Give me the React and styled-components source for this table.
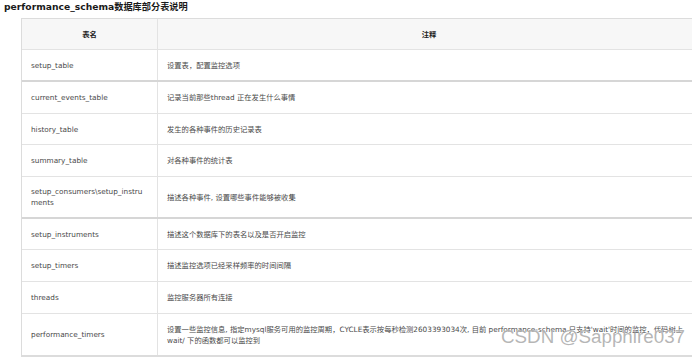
import styled, { createGlobalStyle } from 'styled-components';

const GlobalStyle = createGlobalStyle`
  html, body {
    margin: 0;
    padding: 0;
    background: #fff;
    overflow: hidden;
  }
  body {
    font-family: "DejaVu Sans", "Noto Sans CJK SC", sans-serif;
  }
`;

const Page = styled.div`
  position: relative;
  width: 692px;
  height: 357px;
  overflow: hidden;
`;

const Title = styled.h3`
  margin: 0;
  padding: 1px 0 0 4px;
  height: 17px;
  font-size: 9.2px;
  line-height: 12px;
  font-weight: 700;
  color: #1a1a1a;
  white-space: nowrap;
`;

const Table = styled.div`
  margin-left: 21px;
  width: 678px;
  border: 1px solid #dcdcdc;
  border-bottom-width: 2px;
`;

const Row = styled.div`
  display: grid;
  grid-template-columns: 135px 1fr;
  height: ${(p) => p.$h}px;
  box-sizing: border-box;
  border-bottom: ${(p) => (p.$thick ? '2px solid #d6d6d6' : '1px solid #e3e3e3')};
  background: ${(p) => (p.$head ? '#f7f7f7' : '#fff')};
  &:last-child {
    border-bottom: none;
  }
`;

const Cell = styled.div`
  display: flex;
  align-items: center;
  justify-content: ${(p) => (p.$head ? 'center' : 'flex-start')};
  padding: 0 9px;
  border-left: ${(p) => (p.$first ? 'none' : '1px solid #e3e3e3')};
  font-size: 7.3px;
  line-height: 11px;
  font-weight: ${(p) => (p.$head ? 700 : 400)};
  color: ${(p) => (p.$head ? '#222' : '#4a4a4a')};
  white-space: nowrap;
`;

const Watermark = styled.div`
  position: absolute;
  left: 501px;
  top: 325px;
  font-family: "Liberation Sans", Arial, sans-serif;
  font-size: 18.8px;
  line-height: 24px;
  color: rgba(150, 150, 150, 0.7);
  text-shadow: 0 0 1px rgba(255, 255, 255, 0.9);
  white-space: nowrap;
  pointer-events: none;
`;

const rows = [
  { name: 'setup_table', note: '设置表，配置监控选项', h: 32, thick: true },
  { name: 'current_events_table', note: '记录当前那些thread 正在发生什么事情', h: 32 },
  { name: 'history_table', note: '发生的各种事件的历史记录表', h: 31 },
  { name: 'summary_table', note: '对各种事件的统计表', h: 32 },
  {
    name: ['setup_consumers\\setup_instru', 'ments'],
    note: '描述各种事件, 设置哪些事件能够被收集',
    h: 42,
    thick: true,
  },
  { name: 'setup_instruments', note: '描述这个数据库下的表名以及是否开启监控', h: 31 },
  { name: 'setup_timers', note: '描述监控选项已经采样频率的时间间隔', h: 32 },
  { name: 'threads', note: '监控服务器所有连接', h: 32 },
  {
    name: 'performance_timers',
    note: [
      "设置一些监控信息, 指定mysql服务可用的监控周期，CYCLE表示按每秒检测2603393034次, 目前 performance-schema 只支持'wait'时间的监控，代码树上",
      'wait/ 下的函数都可以监控到',
    ],
    h: 41,
  },
];

const Lines = ({ text }) =>
  Array.isArray(text) ? (
    <span>
      {text.map((t, i) => (
        <span key={i}>
          {t}
          {i < text.length - 1 && <br />}
        </span>
      ))}
    </span>
  ) : (
    text
  );

export default function App() {
  return (
    <>
      <GlobalStyle />
      <Page>
        <Title>performance_schema数据库部分表说明</Title>
        <Table>
          <Row $head $h={31}>
            <Cell $head $first>表名</Cell>
            <Cell $head>注释</Cell>
          </Row>
          {rows.map((r, i) => (
            <Row key={i} $h={r.h} $thick={r.thick}>
              <Cell $first>
                <Lines text={r.name} />
              </Cell>
              <Cell>
                <Lines text={r.note} />
              </Cell>
            </Row>
          ))}
        </Table>
        <Watermark>CSDN @Sapphire037</Watermark>
      </Page>
    </>
  );
}
